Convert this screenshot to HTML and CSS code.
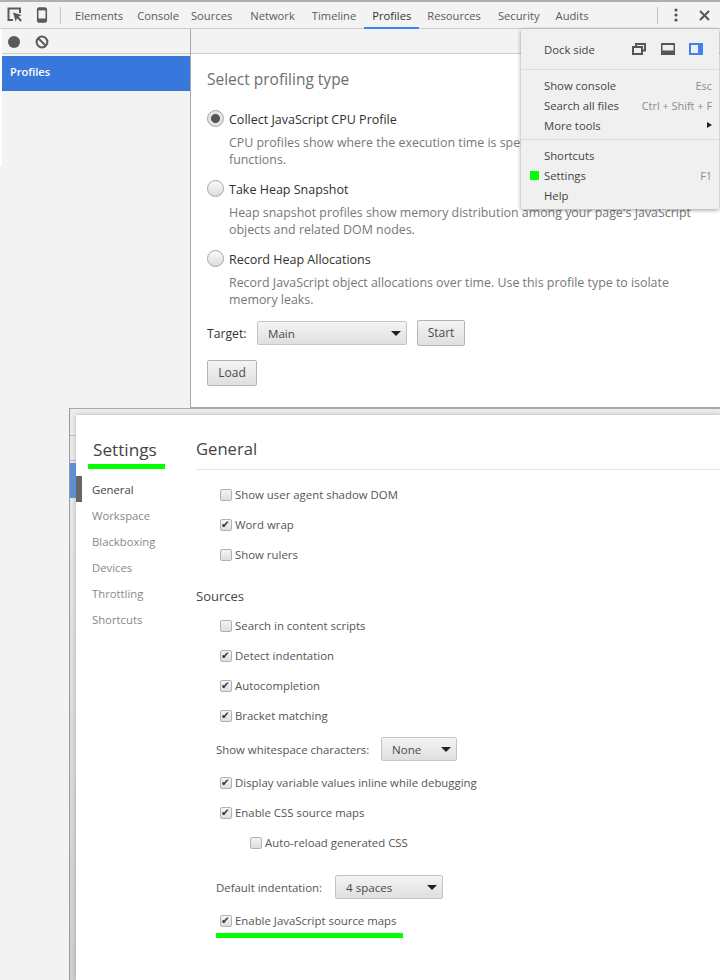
FILE: index.html
```html
<!DOCTYPE html>
<html lang="en">
<head>
<meta charset="utf-8">
<title>DevTools Profiles and Settings</title>
<link rel="stylesheet" href="styles.css">
</head>
<body>
<div class="page">
  <header class="toolbar">
    <svg class="tool-icon inspect" width="16" height="16" viewBox="0 0 16 16"><path d="M13 6V1.5H1.5V13H6" fill="none" stroke="#5a5a5a" stroke-width="2"/><path d="M6 5.5l2.6 9 1.6-3.2 3.2 3.4 1.5-1.5-3.3-3.4 3.2-1.7z" fill="#5a5a5a"/></svg>
    <svg class="tool-icon device" width="12" height="16" viewBox="0 0 12 16"><rect x="1.7" y="1" width="8.6" height="14" rx="1.5" fill="none" stroke="#5a5a5a" stroke-width="1.6"/><rect x="1.7" y="11.5" width="8.6" height="3.5" fill="#5a5a5a"/><rect x="1.7" y="1" width="8.6" height="2.4" fill="#5a5a5a"/></svg>
    <span class="divider"></span>
    <nav class="tabs">
      <span class="tab">Elements</span><span class="tab console-tab">Console</span><span class="tab sources-tab">Sources</span><span class="tab network-tab">Network</span><span class="tab timeline-tab">Timeline</span><span class="tab active">Profiles</span><span class="tab">Resources</span><span class="tab security-tab">Security</span><span class="tab">Audits</span>
    </nav>
    <span class="divider end"></span>
    <svg class="tool-icon dots" width="4" height="14" viewBox="0 0 4 14"><circle cx="2" cy="2" r="1.6" fill="#555"/><circle cx="2" cy="7" r="1.6" fill="#555"/><circle cx="2" cy="12" r="1.6" fill="#555"/></svg>
    <svg class="tool-icon close" width="11" height="11" viewBox="0 0 11 11"><path d="M1 1l9 9M10 1l-9 9" stroke="#555" stroke-width="2"/></svg>
  </header>

  <div class="profiles">
    <aside class="side">
      <div class="side-bar">
        <span class="record"></span>
        <svg width="14" height="14" viewBox="0 0 14 14"><circle cx="7" cy="7" r="5.4" fill="none" stroke="#5a5a5a" stroke-width="2"/><path d="M3.2 3.2l7.6 7.6" stroke="#5a5a5a" stroke-width="2"/></svg>
      </div>
      <div class="side-item">Profiles</div>
    </aside>
    <main class="panel">
      <div class="panel-bar"></div>
      <div class="panel-body">
        <h2 class="panel-title">Select profiling type</h2>
        <div class="ptype">
          <div class="ptype-head"><span class="radio on"></span>Collect JavaScript CPU Profile</div>
          <p class="ptype-desc">CPU profiles show where the execution time is spent in your page's JavaScript functions.</p>
        </div>
        <div class="ptype">
          <div class="ptype-head"><span class="radio"></span>Take Heap Snapshot</div>
          <p class="ptype-desc">Heap snapshot profiles show memory distribution among your page's JavaScript objects and related DOM nodes.</p>
        </div>
        <div class="ptype">
          <div class="ptype-head"><span class="radio"></span>Record Heap Allocations</div>
          <p class="ptype-desc">Record JavaScript object allocations over time. Use this profile type to isolate memory leaks.</p>
        </div>
        <div class="target-row">
          <span class="target-label">Target:</span>
          <span class="select target-select">Main<i class="caret"></i></span>
          <span class="btn">Start</span>
        </div>
        <span class="btn load">Load</span>
      </div>
    </main>
  </div>

  <section class="menu">
    <div class="menu-dock">
      <span>Dock side</span>
      <span class="dock-icons">
        <svg width="14" height="12" viewBox="0 0 14 12"><path d="M4 3V1h9v6.5h-2" fill="none" stroke="#555" stroke-width="2"/><rect x="1" y="4" width="9" height="7" fill="none" stroke="#555" stroke-width="2"/></svg>
        <svg width="14" height="12" viewBox="0 0 14 12"><rect width="14" height="12" fill="#555"/><rect x="1.5" y="2" width="11" height="5.5" fill="#f0f0f0"/></svg>
        <svg width="14" height="12" viewBox="0 0 14 12"><rect width="14" height="12" fill="#3f82f0"/><rect x="2" y="2" width="7" height="8" fill="#f0f0f0"/></svg>
      </span>
    </div>
    <div class="menu-group">
      <div class="menu-row"><span>Show console</span><span class="key">Esc</span></div>
      <div class="menu-row"><span>Search all files</span><span class="key">Ctrl + Shift + F</span></div>
      <div class="menu-row"><span>More tools</span><i class="sub-arrow"></i></div>
    </div>
    <div class="menu-group">
      <div class="menu-row"><span>Shortcuts</span></div>
      <div class="menu-row marked"><span>Settings</span><span class="key">F1</span></div>
      <div class="menu-row"><span>Help</span></div>
    </div>
  </section>

  <section class="settings-window">
    <div class="under-line one"></div>
    <div class="under-line two"></div>
    <div class="under-blue"></div>
    <div class="under-tab"></div>
    <div class="settings">
      <nav class="settings-nav">
        <h1 class="settings-title">Settings</h1>
        <span class="nav-item current">General</span>
        <span class="nav-item">Workspace</span>
        <span class="nav-item">Blackboxing</span>
        <span class="nav-item">Devices</span>
        <span class="nav-item">Throttling</span>
        <span class="nav-item">Shortcuts</span>
      </nav>
      <div class="settings-main">
        <h2 class="general-title">General</h2>
        <div class="opts first">
          <label class="opt"><i class="cb"></i>Show user agent shadow DOM</label>
          <label class="opt"><i class="cb checked"></i>Word wrap</label>
          <label class="opt"><i class="cb"></i>Show rulers</label>
        </div>
        <h3 class="sources-title">Sources</h3>
        <div class="opts">
          <label class="opt"><i class="cb"></i>Search in content scripts</label>
          <label class="opt"><i class="cb checked"></i>Detect indentation</label>
          <label class="opt"><i class="cb checked"></i>Autocompletion</label>
          <label class="opt"><i class="cb checked"></i>Bracket matching</label>
        </div>
        <div class="select-row ws"><span class="select-label ws-label">Show whitespace characters:</span><span class="select ws-select">None<i class="caret"></i></span></div>
        <div class="opts">
          <label class="opt"><i class="cb checked"></i>Display variable values inline while debugging</label>
          <label class="opt"><i class="cb checked"></i>Enable CSS source maps</label>
          <label class="opt nested"><i class="cb"></i>Auto-reload generated CSS</label>
        </div>
        <div class="select-row indent"><span class="select-label indent-label">Default indentation:</span><span class="select indent-select">4 spaces<i class="caret"></i></span></div>
        <div class="opts last">
          <label class="opt"><i class="cb checked"></i>Enable JavaScript source maps</label>
        </div>
      </div>
    </div>
  </section>
</div>
</body>
</html>
```
FILE: styles.css
```css
* { box-sizing: border-box; }
html, body { margin: 0; padding: 0; }
body { width: 720px; height: 980px; overflow: hidden; background: #fff; font-family: "Open Sans", "Noto Sans", sans-serif; font-size: 12px; color: #333; }
.page { position: relative; width: 720px; height: 980px; overflow: hidden; background: #f3f3f3; }

.toolbar { display: flex; align-items: center; height: 29px; background: #f3f3f3; border-top: 2px solid #b0b0b0; border-bottom: 1px solid #cdcdcd; color: #5a5a5a; }
.tool-icon { display: block; flex: none; }
.inspect { margin-left: 7px; }
.device { margin-left: 13px; }
.divider { width: 1px; height: 17px; background: #c4c4c4; margin-left: 12px; flex: none; }
.tabs { display: flex; height: 27px; margin-left: 6px; }
.tab { display: flex; align-items: center; padding: 0 8px; font-size: 11.2px; white-space: nowrap; }
.console-tab { margin-left: -2px; }
.sources-tab { margin-left: -4px; }
.network-tab { margin-left: 2px; }
.timeline-tab { margin-left: 1px; }
.security-tab { margin-left: 1px; }
.tab.active { color: #333; border-bottom: 2px solid #3e82f7; padding-top: 2px; }
.divider.end { position: absolute; left: 657px; top: 7px; margin: 0; }
.dots { position: absolute; left: 674px; top: 8px; }
.close { position: absolute; left: 699px; top: 10px; }

.profiles { display: flex; height: 379px; }
.side { position: relative; width: 191px; flex: none; border-right: 1px solid #a8a8a8; background: #f3f3f3; }
.side::before { content: ""; position: absolute; left: 0; top: 0; width: 2px; height: 137px; background: #fff; }
.side-bar { display: flex; align-items: center; gap: 15px; height: 25px; padding: 2px 0 0 8px; border-bottom: 1px solid #cdcdcd; margin-left: 2px; }
.record { width: 12px; height: 12px; border-radius: 50%; background: #5a5a5a; margin-left: -2px; }
.side-item { height: 35px; margin: 2px 0 0 2px; padding: 7px 8px; background: #3878dc; color: #fff; font-size: 11px; font-weight: 600; line-height: 17px; }
.panel { flex: 1; min-width: 0; background: #fff; border-bottom: 1px solid #a8a8a8; }
.panel-bar { height: 25px; background: #f3f3f3; border-bottom: 1px solid #cdcdcd; }
.panel-body { padding: 14px 16px 0; }
.panel-title { margin: 0 0 19px; font-size: 15.5px; font-weight: 400; line-height: 22px; color: #6e6e6e; }
.ptype { height: 70px; }
.ptype-head { display: flex; align-items: center; height: 20px; font-size: 12.5px; color: #303030; }
.radio { width: 17px; height: 17px; margin: -1px 5px 0 0; border: 1px solid #a6a6a6; border-radius: 50%; background: linear-gradient(#fafafa, #dcdcdc); flex: none; }
.radio.on { background: radial-gradient(circle, #555 0 4px, #e3e3e3 5px); }
.ptype-desc { margin: 5px 0 0 22px; width: 490px; font-size: 12.4px; line-height: 17px; color: #777; }
.target-row { display: flex; align-items: center; height: 26px; margin-top: 1px; }
.target-label { width: 50px; font-size: 12.2px; color: #333; }
.select { position: relative; display: block; height: 24px; padding-left: 10px; line-height: 23px; border: 1px solid #c4c4c4; border-radius: 2px; background: linear-gradient(#f4f4f4, #dfdfdf); color: #4a4a4a; font-size: 11.6px; }
.caret { position: absolute; top: 9px; right: 5px; width: 0; height: 0; border-left: 5px solid transparent; border-right: 5px solid transparent; border-top: 5px solid #222; }
.target-select { width: 150px; }
.btn { display: block; width: 48px; height: 26px; margin-left: 10px; text-align: center; line-height: 24px; border: 1px solid #b4b4b4; border-radius: 2px; background: linear-gradient(#f4f4f4, #dfdfdf); color: #4a4a4a; font-size: 12px; }
.btn.load { width: 50px; margin: 14px 0 0; }

.menu { position: absolute; left: 521px; top: 29px; width: 198px; height: 180px; background: #f0f0f0; border-radius: 2px; box-shadow: 0 1px 4px rgba(0,0,0,.4); font-size: 11.3px; color: #444; }
.menu-dock { display: flex; align-items: center; justify-content: space-between; height: 40px; padding: 0 16px 0 23px; }
.dock-icons { display: flex; gap: 14.5px; align-items: center; }
.dock-icons svg { display: block; }
.menu-group { padding: 5px 7px 4px 23px; border-top: 1px solid #dcdcdc; }
.menu-group + .menu-group { padding-bottom: 0; }
.menu-row { position: relative; display: flex; justify-content: space-between; align-items: center; height: 20px; }
.key { color: #8c8c8c; font-size: 10.9px; }
.sub-arrow { width: 0; height: 0; border-top: 3px solid transparent; border-bottom: 3px solid transparent; border-left: 5px solid #222; }
.marked::before { content: ""; position: absolute; left: -14px; top: 6px; width: 9px; height: 9px; background: #00ff00; }

.settings-window { position: absolute; left: 69px; top: 408px; width: 651px; height: 572px; background: linear-gradient(#ececec, #cfcfcf); border-left: 1px solid #9c9c9c; border-top: 1px solid #a8a8a8; padding: 6px 0 0 6px; }
.under-line { position: absolute; left: 0; width: 6px; height: 1px; background: #b8b8b8; }
.under-line.one { top: 26px; }
.under-line.two { top: 51px; }
.under-blue { position: absolute; left: 0; top: 54px; width: 6px; height: 35px; background: #5f8ed8; }
.under-tab { position: absolute; left: 6px; top: 67px; width: 6px; height: 26px; background: #666; z-index: 2; }
.settings { display: flex; height: 100%; background: #fff; box-shadow: 0 0 4px rgba(0,0,0,.25); }
.settings-nav { width: 120px; flex: none; display: flex; flex-direction: column; }
.settings-title { position: relative; margin: 23px 0 15px 17px; font-size: 17.2px; font-weight: 400; line-height: 24px; color: #444; }
.settings-title::after { content: ""; position: absolute; left: -5px; bottom: -7px; width: 77px; height: 5px; background: #00ff00; }
.nav-item { height: 26px; padding-left: 16px; line-height: 26px; color: #888; font-size: 11.3px; }
.nav-item.current { color: #444; }
.settings-main { flex: 1; }
.general-title { height: 33px; margin: 22px 0 0; padding: 0; border-bottom: 1px solid #e6e6e6; font-size: 16.6px; font-weight: 400; line-height: 24px; color: #444; }
.opts.first { margin-top: 10px; }
.opts { display: flex; flex-direction: column; }
.opt { display: flex; align-items: center; height: 30px; margin-left: 24px; padding-bottom: 2px; color: #555; font-size: 11.4px; white-space: nowrap; }
.opt.nested { margin-left: 54px; }
.cb { position: relative; width: 12px; height: 12px; margin: 2px 3px 0 0; flex: none; border: 1px solid #b2b2b2; border-radius: 2px; background: linear-gradient(#f4f4f4, #dedede); }
.cb.checked::after { content: "\2714"; position: absolute; left: 0; top: -2px; font-family: "DejaVu Sans", sans-serif; font-style: normal; font-size: 10.5px; line-height: 13px; color: #333; }
.sources-title { height: 20px; margin: 16px 0 5px; font-size: 13px; font-weight: 400; line-height: 20px; color: #444; }
.select-row { display: flex; align-items: center; margin-left: 20px; color: #555; font-size: 11.4px; }
.ws { height: 24px; margin-top: 6px; margin-bottom: 7px; }
.ws-label { width: 165px; }
.ws-select { width: 76px; }
.indent { height: 24px; margin-top: 17px; margin-bottom: 7px; }
.indent-label { width: 119px; }
.indent-select { width: 108px; }
.last .opt { position: relative; }
.last .opt::after { content: ""; position: absolute; left: -4px; top: 27px; width: 187px; height: 5px; background: #00ff00; }
```
